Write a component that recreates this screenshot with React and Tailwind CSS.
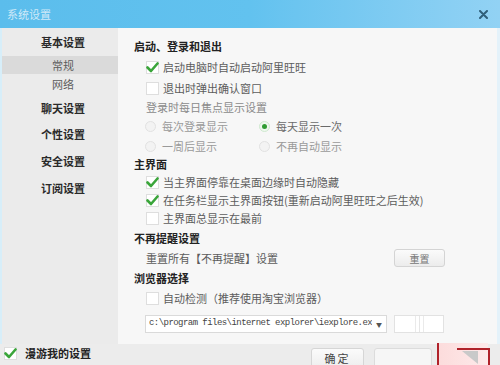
import React from 'react'

const font = { fontFamily: '"Noto Sans CJK SC", "Noto Sans", sans-serif' }

function Check({ checked }) {
  return (
    <span className="relative w-[13px] h-[13px] bg-white border border-[#dedede] shrink-0 flex items-center justify-center">
      {checked && (
        <svg width="13" height="11" viewBox="0 0 13 11" className="absolute">
          <path d="M1.5 5.5 L5 9 L11.5 1.5" fill="none" stroke="#3aa53a" strokeWidth="2.6" strokeLinecap="round" strokeLinejoin="round" />
        </svg>
      )}
    </span>
  )
}

function Radio({ on, label }) {
  return (
    <div className="flex items-center gap-[6px]">
      <span className={`w-[11px] h-[11px] rounded-full border flex items-center justify-center shrink-0 ${on ? 'border-[#cfe9cf] bg-[#eef8ee]' : 'border-[#e2e2e2] bg-[#f3f3f3]'}`}>
        {on && <span className="w-[5px] h-[5px] rounded-full bg-[#2f9c32]"></span>}
      </span>
      <span className={on ? 'text-[#6a6a6a]' : ''}>{label}</span>
    </div>
  )
}

function CheckRow({ checked, label, h }) {
  return (
    <div className={`flex items-center gap-[4px] pl-[12px] ${h}`}>
      <Check checked={checked} />
      <span>{label}</span>
    </div>
  )
}

export default function App() {
  return (
    <div className="w-[500px] h-[365px] flex flex-col overflow-hidden bg-[#ececec] text-[11px] text-[#5c5c5c]" style={font}>
      {/* Title bar */}
      <div className="h-[28px] shrink-0 flex items-center justify-between pl-[7px] pr-[12px] bg-gradient-to-r from-[#5bbdec] via-[#62c2ef] to-[#92d2f4]">
        <span className="text-[11px] text-[#cfe9f8]">系统设置</span>
        <svg width="9" height="9" viewBox="0 0 9 9">
          <path d="M1 1 L8 8 M8 1 L1 8" stroke="#2f5f7a" strokeWidth="2" strokeLinecap="round" />
        </svg>
      </div>

      <div className="flex flex-1 min-h-0">
        {/* Sidebar */}
        <div className="w-[118px] shrink-0 border-l-[2px] border-[#d7eef9] bg-[#ebebeb] flex flex-col text-[11px]">
          <div className="h-[28px] flex items-center justify-center pl-[6px] font-bold text-[#2a2a2a]">基本设置</div>
          <div className="h-[18px] bg-[#dadada] flex items-center justify-center pl-[6px]">常规</div>
          <div className="h-[21px] flex items-center justify-center pl-[6px]">网络</div>
          <div className="h-[26px] flex items-center justify-center pl-[6px] font-bold text-[#2a2a2a]">聊天设置</div>
          <div className="h-[27px] flex items-center justify-center pl-[6px] font-bold text-[#2a2a2a]">个性设置</div>
          <div className="h-[27px] flex items-center justify-center pl-[6px] font-bold text-[#2a2a2a]">安全设置</div>
          <div className="h-[27px] flex items-center justify-center pl-[6px] font-bold text-[#2a2a2a]">订阅设置</div>
        </div>

        {/* Content */}
        <div className="flex-1 bg-[#f7f7f7] border-r-[3px] border-[#e4f2fa] flex flex-col pl-[16px] pt-[8px]">
          <div className="h-[20px] flex items-center font-bold text-[#222]">启动、登录和退出</div>
          <CheckRow checked label="启动电脑时自动启动阿里旺旺" h="h-[22px]" />
          <CheckRow label="退出时弹出确认窗口" h="h-[20px]" />
          <div className="h-[18px] flex items-center pl-[12px] text-[#8a8a8a]">登录时每日焦点显示设置</div>
          <div className="grid grid-cols-[114px_120px] grid-rows-[21px_18px] items-center pl-[11px] text-[#9a9a9a]">
            <Radio label="每次登录显示" />
            <Radio on label="每天显示一次" />
            <Radio label="一周后显示" />
            <Radio label="不再自动显示" />
          </div>
          <div className="h-[18px] flex items-center font-bold text-[#222]">主界面</div>
          <CheckRow checked label="当主界面停靠在桌面边缘时自动隐藏" h="h-[19px]" />
          <CheckRow checked label="在任务栏显示主界面按钮(重新启动阿里旺旺之后生效)" h="h-[17px]" />
          <CheckRow label="主界面总显示在最前" h="h-[18px]" />
          <div className="h-[22px] flex items-center font-bold text-[#222]">不再提醒设置</div>
          <div className="h-[18px] flex items-center justify-between pl-[12px] pr-[52px]">
            <span>重置所有【不再提醒】设置</span>
            <button className="w-[51px] h-[18px] rounded-[3px] border border-[#d4d4d4] bg-gradient-to-b from-[#fbfbfb] to-[#ececec] text-[10px] text-[#777]">重置</button>
          </div>
          <div className="h-[22px] flex items-center font-bold text-[#222]">浏览器选择</div>
          <CheckRow label="自动检测（推荐使用淘宝浏览器）" h="h-[18px]" />
          <div className="mt-[8px] flex items-center gap-[7px] pl-[11px]">
            <div className="w-[242px] h-[18px] bg-white border border-[#dadada] flex items-center justify-between pl-[3px] pr-[4px]">
              <span className="text-[9px] tracking-[-0.55px] text-[#444] whitespace-nowrap overflow-hidden" style={{ fontFamily: '"Liberation Mono", monospace' }}>c:\program files\internet explorer\iexplore.ex</span>
              <span className="text-[6px] text-[#555]">▼</span>
            </div>
            <div className="w-[50px] h-[18px] bg-white border border-[#e2e2e2] flex justify-center gap-[3px]">
              <span className="w-[1px] h-full bg-[#eaeaea]"></span>
              <span className="w-[1px] h-full bg-[#e6e6e6]"></span>
              <span className="w-[1px] h-full bg-[#eaeaea]"></span>
            </div>
          </div>
        </div>
      </div>

      {/* Bottom bar */}
      <div className="h-[21px] shrink-0 flex items-start relative">
        <div className="w-[311px] h-[19px] flex items-center gap-[8px] pl-[4px]">
          <Check checked />
          <span className="font-bold text-[#222] leading-none">漫游我的设置</span>
        </div>
        <button className="mt-[4px] w-[53px] h-[20px] rounded-[3px] border border-[#d6d6d6] bg-gradient-to-b from-[#fbfbfb] to-[#eeeeee] text-[#444] tracking-[2px] leading-none">确定</button>
        <div className="ml-[10px] mt-[4px] w-[58px] h-[20px] rounded-[3px] border border-[#dcdcdc] bg-[#f6f6f6]"></div>
        <div className="absolute left-[437px] top-[-1px] w-[51px] h-[22px] border-l-[2px] border-[#b0222a] bg-gradient-to-r from-[#fcdcdc] to-[#fdeaea]">
          <div className="absolute left-[18px] top-[5px] right-[-2px] bottom-0 border-t-[2px] border-r-[2px] border-[#b0222a] flex justify-end">
            <svg width="16" height="13" viewBox="0 0 16 13" className="mr-[10px] mt-[1px]">
              <path d="M0 0 L16 0 L16 13 Z" fill="#c9c9c9" />
            </svg>
          </div>
        </div>
      </div>
    </div>
  )
}
